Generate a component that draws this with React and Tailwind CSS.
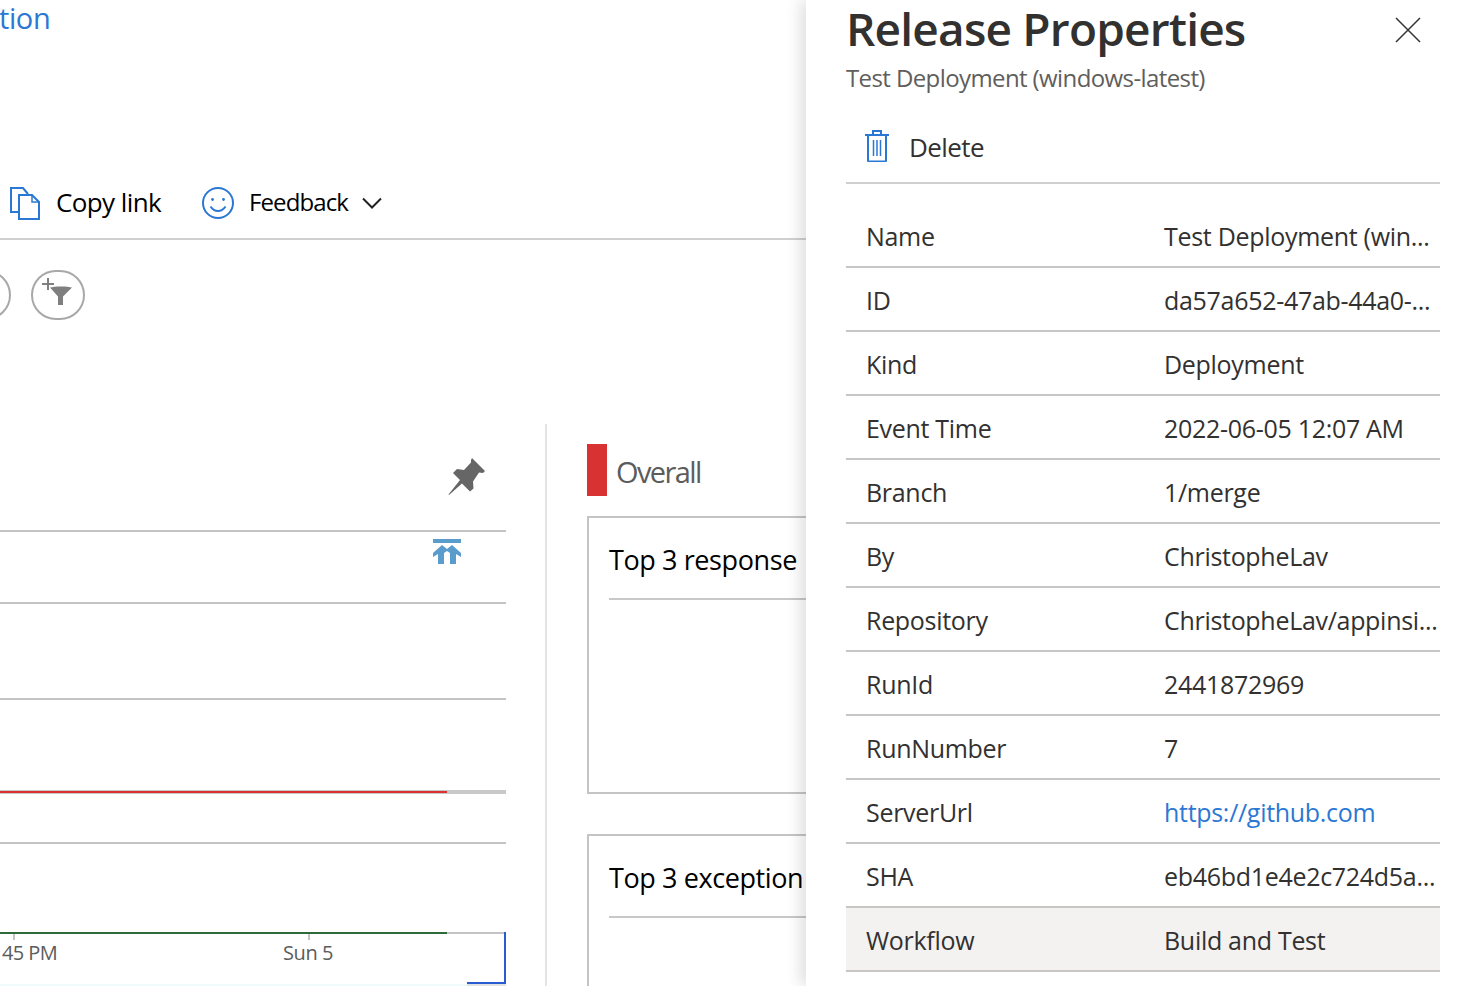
const font = "font-['Open_Sans','Noto_Sans',sans-serif]";

const rows = [
  ["Name", "Test Deployment (win..."],
  ["ID", "da57a652-47ab-44a0-..."],
  ["Kind", "Deployment"],
  ["Event Time", "2022-06-05 12:07 AM"],
  ["Branch", "1/merge"],
  ["By", "ChristopheLav"],
  ["Repository", "ChristopheLav/appinsi..."],
  ["RunId", "2441872969"],
  ["RunNumber", "7"],
  ["ServerUrl", "https://github.com", true],
  ["SHA", "eb46bd1e4e2c724d5a..."],
  ["Workflow", "Build and Test", false, true],
];

function CopyIcon() {
  return (
    <svg width="30" height="33" viewBox="0 0 30 33" fill="none" stroke="#2b78d4" strokeWidth="2">
      <path d="M9 25H1V1h12l5 6" />
      <path d="M9 8h13l7 7v17H9z" fill="#fff" />
      <path d="M22 8v7h7" strokeWidth="1.5" />
    </svg>
  );
}

function SmileIcon() {
  return (
    <svg width="32" height="32" viewBox="0 0 32 32" fill="none" stroke="#2b78d4" strokeWidth="2">
      <circle cx="16" cy="16" r="15" />
      <circle cx="10.5" cy="12.5" r="1.4" fill="#2b78d4" stroke="none" />
      <circle cx="21.5" cy="12.5" r="1.4" fill="#2b78d4" stroke="none" />
      <path d="M8.5 19.5c2 3 4.5 4.5 7.5 4.500s5.500-1.500 7.500-4.500" />
    </svg>
  );
}

function Chevron() {
  return (
    <svg width="20" height="12" viewBox="0 0 20 12" fill="none" stroke="#222" strokeWidth="2">
      <path d="M1 1.500l9 9 9-9" />
    </svg>
  );
}

function FilterAddIcon() {
  return (
    <svg width="40" height="36" viewBox="0 0 40 36" fill="#7f7f7f">
      <path d="M9 1h2v5h5v2h-5v5H9V8H4V6h5z" />
      <path d="M12 10.500c4-1.500 18-1.500 22 0l-9 9V28h-5v-8.500z" />
    </svg>
  );
}

function PinIcon() {
  return (
    <svg width="37" height="38" viewBox="0 0 37 38" fill="#666">
      <path d="M24 0l13 13-2 2-4-.5-6 9 .5 7-3.500 3-8-8L1 37l-.5-.5L12 22l-7-7 4-4 7 1 7-7.500L23 2z" />
    </svg>
  );
}

function AnnotationIcon() {
  return (
    <svg width="28" height="25" viewBox="0 0 28 25" fill="#5a9ccb">
      <path d="M0 0h28v4H0z" />
      <path d="M9 6l5 4 5-4 9 8v4l-5-3v10h-6V14l-3-2-3 2v11H5V15l-5 3v-4z" />
    </svg>
  );
}

function TrashIcon() {
  return (
    <svg width="24" height="32" viewBox="0 0 24 32" fill="none" stroke="#2b78d4" strokeWidth="1.500">
      <path d="M0 5h24M8 5V1h8v4" strokeWidth="2" />
      <path d="M3 5v25.500c0 .5.500 1 1 1h16c.5 0 1-.5 1-1V5" strokeWidth="2" />
      <path d="M8.500 10v16M12 10v16M15.500 10v16" />
    </svg>
  );
}

function CloseIcon() {
  return (
    <svg width="26" height="26" viewBox="0 0 26 26" fill="none" stroke="#333" strokeWidth="1.500">
      <path d="M1 1l24 24M25 1L1 25" />
    </svg>
  );
}

function Lane({ height, children }) {
  return (
    <div className="relative border-b-2 border-[#c4c4c4]" style={{ height }}>
      {children}
    </div>
  );
}

function Card({ title, height }) {
  return (
    <div className="w-[420px] shrink-0 border-2 border-[#c4c4c4] pl-5" style={{ height }}>
      <div className="h-[82px] border-b-2 border-[#c8c8c8] pt-6 text-[27px] leading-[36px] text-black tracking-[-0.4px] whitespace-nowrap">
        {title}
      </div>
    </div>
  );
}

export default function App() {
  return (
    <div className={`${font} flex h-[986px] w-[1466px] overflow-hidden bg-white`}>
      {/* page behind the panel */}
      <div className="w-[806px] shrink-0 overflow-hidden">
        <div className="h-[36px] text-[29px] leading-[35px] text-[#2b78d4] -ml-[1px] tracking-[-0.4px]">tion</div>

        <div className="flex h-[204px] items-start border-b-2 border-[#d2d0ce] pt-[149px]">
          <div className="ml-[10px] flex items-center">
            <CopyIcon />
            <span className="mb-[2px] ml-[16px] text-[26px] leading-[34px] text-black tracking-[-0.6px]">Copy link</span>
          </div>
          <div className="ml-[41px] flex items-center">
            <SmileIcon />
            <span className="mb-[2px] ml-[15px] text-[24px] leading-[34px] text-black tracking-[-0.9px]">Feedback</span>
            <span className="ml-[14px]"><Chevron /></span>
          </div>
        </div>

        <div className="flex h-[184px] items-start gap-5 pt-[30px]">
          <div className="-ml-[42px] h-[50px] w-[53px] rounded-full border-2 border-[#a8a8a8]" />
          <div className="flex h-[50px] w-[54px] items-center justify-center rounded-full border-2 border-[#a8a8a8]">
            <FilterAddIcon />
          </div>
        </div>

        <div className="flex">
          <div className="relative w-[506px] shrink-0">
            <div className="h-[108px] border-b-2 border-[#c4c4c4] pt-[34px]">
              <div className="flex justify-end pr-[21px]"><PinIcon /></div>
            </div>
            <Lane height={72}>
              <div className="flex justify-end pr-[45px] pt-[7px]"><AnnotationIcon /></div>
            </Lane>
            <Lane height={96} />
            <div className="flex h-[94px] flex-col justify-end">
              <div className="flex h-[4px] bg-[#c8c8c8]"><div className="mt-[1px] h-[2px] w-[447px] bg-[#d83232]" /></div>
            </div>
            <Lane height={50} />
            <div className="h-[88px]" />
            <div className="flex h-[2px] bg-[#c4c4c4]"><div className="h-[2px] w-[447px] bg-[#2f6b3a]" /></div>

            <div className="relative h-[50px]">
              <div className="absolute left-[13px] top-0 h-[6px] w-[2px] bg-[#c4c4c4]" />
              <div className="absolute left-[308px] top-0 h-[6px] w-[2px] bg-[#c4c4c4]" />
              <span className="absolute left-[2px] top-[5px] text-[20px] leading-[28px] text-[#5c5c5c] tracking-[-0.6px]">45 PM</span>
              <span className="absolute left-[283px] top-[5px] text-[20px] leading-[28px] text-[#5c5c5c] tracking-[-0.4px]">Sun 5</span>
              <div className="absolute -top-[2px] right-0 h-[52px] w-[39px] border-b-2 border-r-2 border-[#2a5bd0]" />
            </div>
            <div className="flex h-[2px]">
              <div className="w-[467px] bg-[#effafa]" />
              <div className="flex-1 bg-[#e2e2e2]" />
            </div>
          </div>

          <div className="ml-[39px] w-[2px] shrink-0 bg-[#e4e4e4]" />

          <div className="ml-[40px] flex shrink-0 flex-col pt-5">
            <div className="flex h-[52px] items-center">
              <div className="h-[52px] w-[20px] bg-[#d83232]" />
              <span className="ml-[9px] pt-[3px] text-[29px] text-[#5c5c5c] tracking-[-1.6px]">Overall</span>
            </div>
            <div className="mt-5"><Card title="Top 3 response" height={278} /></div>
            <div className="mt-10"><Card title="Top 3 exception" height={200} /></div>
          </div>
        </div>
      </div>

      {/* release properties panel */}
      <div className="z-10 h-[986px] w-[660px] shrink-0 bg-white pl-[40px] pr-[26px] shadow-[-6px_0_14px_rgba(0,0,0,0.12)]">
        <div className="flex h-[60px] items-center justify-between pr-[19px]">
          <h1 className="pb-1 text-[46px] font-semibold leading-[56px] text-[#323130] tracking-[-0.8px]">Release Properties</h1>
          <CloseIcon />
        </div>
        <div className="h-[36px] text-[24px] leading-[36px] text-[#605e5c] tracking-[-0.6px]">Test Deployment (windows-latest)</div>

        <div className="flex h-[88px] items-center border-b-2 border-[#d2d0ce] pl-5 pt-[17px]">
          <span className="mb-1 -ml-[1px]"><TrashIcon /></span>
          <span className="ml-5 text-[26px] text-[#323130] tracking-[-0.6px]">Delete</span>
        </div>

        <div className="pt-[20px]">
          {rows.map(([label, value, link, active]) => (
            <div
              key={label}
              className={`flex h-[64px] items-center border-b-2 border-[#c8c6c4] pl-5 pt-1 text-[25px] text-[#323130] tracking-[-0.3px] ${active ? "bg-[#f3f2f1]" : ""}`}
            >
              <div className="w-[298px] shrink-0">{label}</div>
              <div className={`min-w-0 flex-1 whitespace-nowrap ${link ? "text-[#2b78d4]" : ""}`}>{value}</div>
            </div>
          ))}
        </div>
      </div>
    </div>
  );
}
